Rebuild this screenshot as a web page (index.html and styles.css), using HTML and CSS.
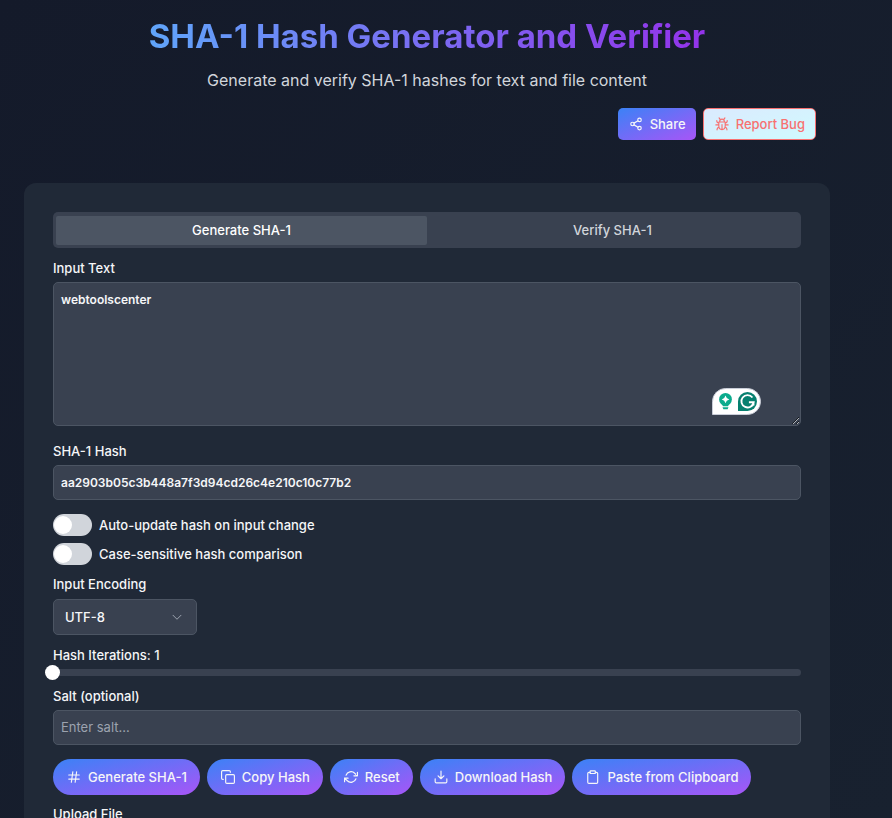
FILE: index.html
```html
<!DOCTYPE html>
<html lang="en">
<head>
<meta charset="utf-8">
<meta name="viewport" content="width=device-width, initial-scale=1">
<title>SHA-1 Hash Generator and Verifier</title>
<link rel="stylesheet" href="styles.css">
</head>
<body>
<main class="page">
  <header class="header">
    <h1 class="title">SHA-1 Hash Generator and Verifier</h1>
    <p class="subtitle">Generate and verify SHA-1 hashes for text and file content</p>
    <div class="header-actions">
      <button type="button" class="btn btn-share">
        <svg class="icon" viewBox="0 0 24 24"><circle cx="18" cy="5" r="3"/><circle cx="6" cy="12" r="3"/><circle cx="18" cy="19" r="3"/><path d="M8.600 13.500l6.800 4M15.400 6.500l-6.800 4"/></svg>
        Share
      </button>
      <button type="button" class="btn btn-report">
        <svg class="icon" viewBox="0 0 24 24"><path d="M6.500 8.500h11v7a5.500 6 0 0 1-11 0zM8 8.500V7.500a4 4 0 0 1 8 0v1M12 13v8M7 1.500L9 4.500M17 1.500L15 4.500M1.500 13.500h5M17.500 13.500h5M6.500 10.500Q3 10 3 6M17.500 10.500Q21 10 21 6M7 17.500Q3.500 18 3.500 22M17 17.500Q20.500 18 20.500 22"/></svg>
        Report Bug
      </button>
    </div>
  </header>

  <section class="card">
    <div class="tabs" role="tablist">
      <button type="button" class="tab tab-active" role="tab" aria-selected="true">Generate SHA-1</button>
      <button type="button" class="tab" role="tab" aria-selected="false">Verify SHA-1</button>
    </div>

    <div class="field">
      <label for="input-text">Input Text</label>
      <div class="textarea-wrap">
        <textarea id="input-text" class="control" spellcheck="false">webtoolscenter</textarea>
        <div class="assistant">
          <svg class="assistant-icon" viewBox="0 0 20 20"><circle cx="10" cy="7.500" r="7.500" fill="#0bab8d"/><path d="M5 11h10l-2 4.500H7z" fill="#0bab8d"/><path d="M6.500 16.800h7l-1 2.200h-5z" fill="#0bab8d"/><path d="M10 3l1.500 3 3 1.500-3 1.500-1.500 3-1.500-3-3-1.500 3-1.500z" fill="#fff"/></svg>
          <svg class="assistant-icon assistant-g" viewBox="0 0 20 20"><path d="M0 20V10a10 10 0 1 1 10 10z" fill="#06806f"/><path d="M15.200 5.800A6.500 6.500 0 1 0 16.500 10.800H11.500M16.300 10.800v3.500" fill="none" stroke="#fff" stroke-width="2"/></svg>
        </div>
      </div>
    </div>

    <div class="field field-hash">
      <label for="hash">SHA-1 Hash</label>
      <input id="hash" class="control" type="text" readonly value="aa2903b05c3b448a7f3d94cd26c4e210c10c77b2">
    </div>

    <div class="toggles">
      <label class="toggle"><input type="checkbox" class="switch" role="switch">Auto-update hash on input change</label>
      <label class="toggle"><input type="checkbox" class="switch" role="switch">Case-sensitive hash comparison</label>
    </div>

    <div class="field field-select">
      <label for="encoding">Input Encoding</label>
      <div class="select-wrap">
        <select id="encoding" class="control"><option>UTF-8</option><option>UTF-16</option><option>ASCII</option></select>
        <svg class="chevron" viewBox="0 0 24 24"><path d="M4 8.500l8 8 8-8"/></svg>
      </div>
    </div>

    <div class="field">
      <label for="iterations">Hash Iterations: 1</label>
      <div class="slider"><input id="iterations" type="range" min="1" max="1000" value="1"></div>
    </div>

    <div class="field">
      <label for="salt">Salt (optional)</label>
      <input id="salt" class="control" type="text" placeholder="Enter salt...">
    </div>

    <div class="actions">
      <button type="button" class="btn btn-pill"><svg class="icon" viewBox="0 0 24 24"><path d="M3 8.500h18M3 15.500h18M10 3L7.500 21M16.500 3L14 21"/></svg>Generate SHA-1</button>
      <button type="button" class="btn btn-pill"><svg class="icon" viewBox="0 0 24 24"><rect x="8" y="8" width="15" height="15" rx="2"/><path d="M4 16H3a2 2 0 0 1-2-2V3a2 2 0 0 1 2-2h11a2 2 0 0 1 2 2v1"/></svg>Copy Hash</button>
      <button type="button" class="btn btn-pill"><svg class="icon" viewBox="0 0 24 24"><path d="M23 4v6h-6M1 20v-6h6M3.500 9a9 9 0 0 1 14.900-3.400L23 10M1 14l4.600 4.400A9 9 0 0 0 20.500 15"/></svg>Reset</button>
      <button type="button" class="btn btn-pill"><svg class="icon" viewBox="0 0 24 24"><path d="M2 15v5a2 2 0 0 0 2 2h16a2 2 0 0 0 2-2v-5M7 10l5 5 5-5M12 15V2"/></svg>Download Hash</button>
      <button type="button" class="btn btn-pill"><svg class="icon" viewBox="0 0 24 24"><path d="M16 4h2a2 2 0 0 1 2 2v15a2 2 0 0 1-2 2H5a2 2 0 0 1-2-2V6a2 2 0 0 1 2-2h2"/><rect x="7" y="1.500" width="9" height="4.500" rx="1"/></svg>Paste from Clipboard</button>
    </div>

    <div class="field">
      <label for="upload">Upload File</label>
      <input id="upload" class="control" type="file">
    </div>
  </section>
</main>
</body>
</html>
```
FILE: styles.css
```css
* {
  box-sizing: border-box;
}

body {
  margin: 0;
  height: 100vh;
  overflow: hidden;
  background: linear-gradient(to bottom right, #141a2a, #18212f);
  color: #f5f6f8;
  font: 500 13px/20px Inter, "Liberation Sans", sans-serif;
}

button,
input,
textarea,
select {
  font: inherit;
  color: inherit;
}

.page {
  padding: 12px 62px 24px 24px;
}

.header {
  text-align: center;
}

.title {
  width: fit-content;
  margin: 0 auto;
  background: linear-gradient(to right, #60a5fa, #9333ea);
  background-clip: text;
  -webkit-background-clip: text;
  color: transparent;
  font-size: 33px;
  font-weight: 700;
  line-height: 48px;
}

.subtitle {
  margin: 8px 0 16px;
  color: #d1d5db;
  font-size: 16px;
  font-weight: 400;
  line-height: 24px;
}

.header-actions {
  display: flex;
  justify-content: flex-end;
  gap: 7px;
  padding-right: 14px;
}

.btn {
  display: flex;
  align-items: center;
  gap: 7px;
  border: 0;
  background: linear-gradient(to bottom right, #3b82f6, #a855f7);
  white-space: nowrap;
}

.btn-share,
.btn-report {
  height: 32px;
  padding: 0 10px 0 11px;
  border-radius: 5px;
}

.btn-report {
  border: 1px solid #f87171;
  background: linear-gradient(to bottom right, #dbeafe, #cffafe);
  color: #f87171;
}

.icon,
.chevron {
  width: 14px;
  height: 14px;
  flex: none;
  fill: none;
  stroke: currentColor;
  stroke-width: 2;
  stroke-linecap: round;
  stroke-linejoin: round;
}

.card {
  margin-top: 43px;
  padding: 29px;
  border-radius: 12px;
  background: #202937;
}

.tabs {
  display: grid;
  grid-template-columns: 1fr 1fr;
  height: 36px;
  margin-bottom: 10px;
  padding: 4px 3px 3px;
  border-radius: 5px;
  background: #394150;
}

.tab {
  padding: 0 0 2px;
  border: 0;
  border-radius: 2px;
  background: none;
  color: #d1d5db;
}

.tab-active {
  background: #4c5563;
  color: #fff;
}

.field {
  display: flex;
  flex-direction: column;
  gap: 4px;
  margin-bottom: 10px;
}

.field-select {
  gap: 5px;
}

.control {
  display: block;
  width: 100%;
  height: 35px;
  padding: 0 7px;
  border: 1px solid #4c5563;
  border-radius: 5px;
  outline: 0;
  background: #394150;
  font-size: 12px;
  font-weight: 600;
}

.control::placeholder {
  color: #9ca3af;
  font-size: 13px;
  font-weight: 400;
}

.textarea-wrap {
  position: relative;
}

textarea.control {
  height: 144px;
  padding: 7px;
  resize: vertical;
}

.assistant {
  position: absolute;
  right: 40px;
  bottom: 11px;
  display: flex;
  align-items: center;
  gap: 4px;
  height: 27px;
  padding: 0 3px 0 4px;
  border: 1px solid #c9cdd8;
  border-radius: 14px 14px 14px 0;
  background: #fff;
}

.assistant-icon {
  width: 17px;
  height: 17px;
}

.assistant-g {
  width: 19px;
  height: 19px;
}

.field-hash {
  margin: 15px 0 14px;
}

.toggles {
  display: grid;
  gap: 7px;
  margin-bottom: 9px;
}

.toggle {
  display: flex;
  align-items: center;
  gap: 7px;
}

.switch {
  appearance: none;
  width: 39px;
  height: 22px;
  margin: 0;
  padding: 2px 1px;
  border-radius: 11px;
  background: #d1d5db;
}

.switch::before {
  content: "";
  display: block;
  width: 18px;
  height: 18px;
  border-radius: 50%;
  background: #fff;
}

.switch:checked::before {
  margin-left: auto;
}

.select-wrap {
  display: grid;
  align-items: center;
  width: 144px;
}

.select-wrap > * {
  grid-area: 1 / 1;
}

select.control {
  appearance: none;
  height: 36px;
  padding: 0 11px;
  font-size: 13px;
  font-weight: 500;
}

.chevron {
  width: 12px;
  height: 12px;
  margin-right: 14px;
  justify-self: end;
  color: #9ca3af;
  pointer-events: none;
}

.slider {
  height: 7px;
  border-radius: 4px;
  background: #394150;
}

.slider input {
  appearance: none;
  display: block;
  width: calc(100% + 16px);
  height: 15px;
  margin: -4px -8px;
  background: none;
}

.slider input::-webkit-slider-thumb {
  appearance: none;
  width: 15px;
  height: 15px;
  border-radius: 50%;
  background: #fff;
}

.actions {
  display: flex;
  flex-wrap: wrap;
  gap: 7px;
  margin: 14px 0 9px;
}

.btn-pill {
  height: 36px;
  padding: 0 13px 0 14px;
  border-radius: 18px;
}
```
